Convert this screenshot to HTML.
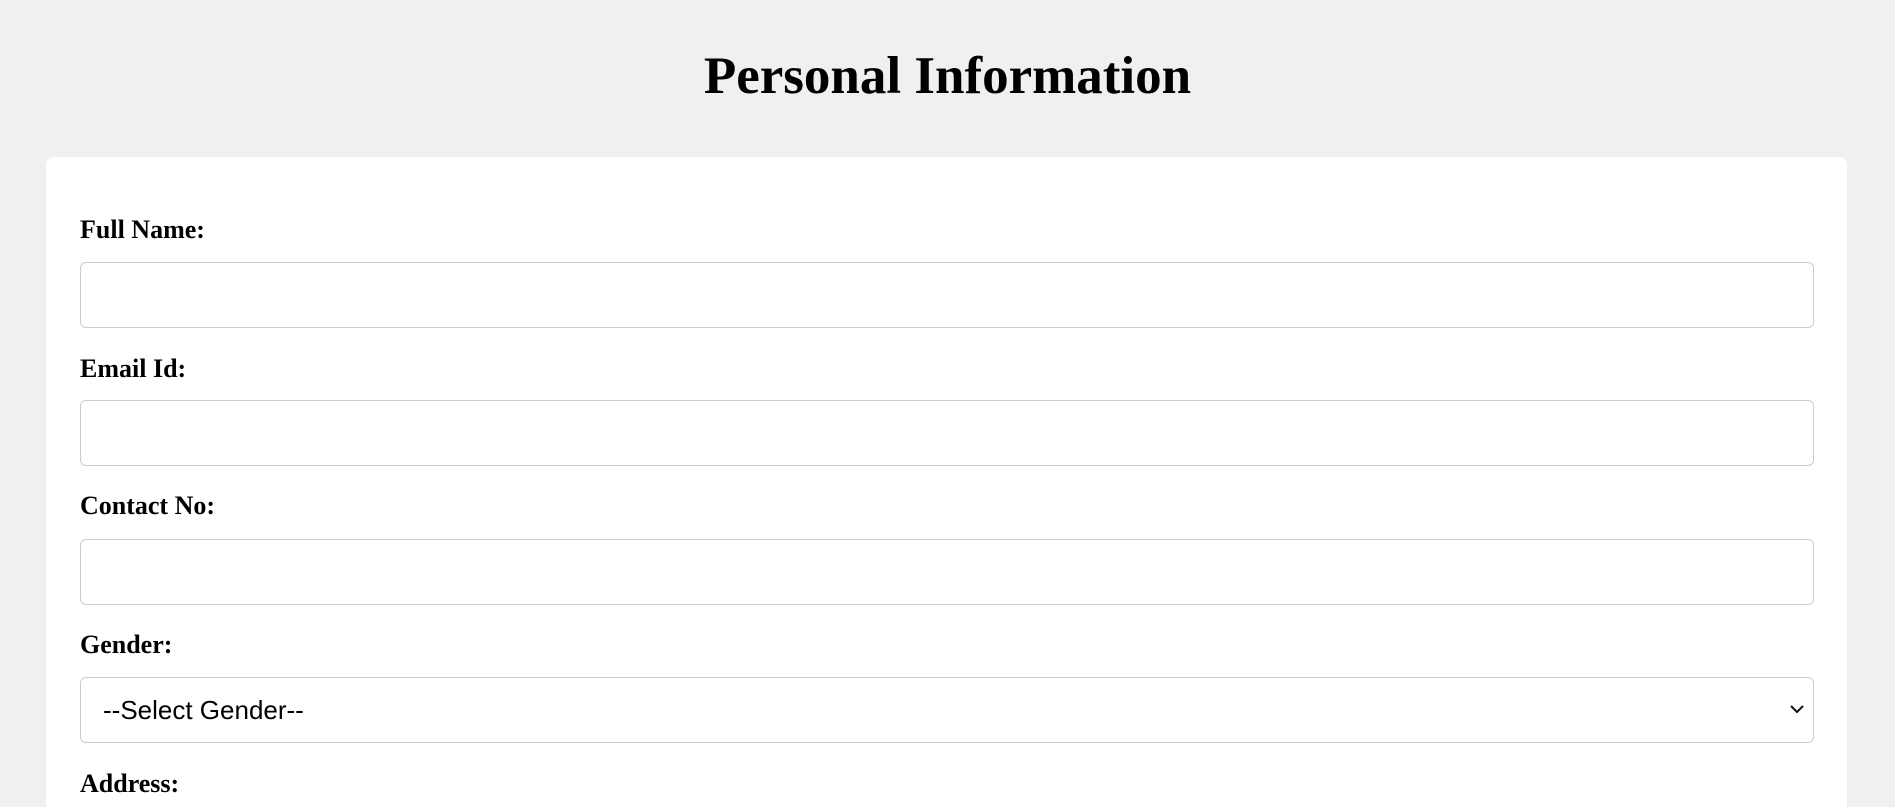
<!DOCTYPE html>
<html><head><style>
html,body{margin:0;padding:0;overflow:hidden;height:807px}
body{width:1895px;background:#f0f0f0;font-family:"Liberation Serif",serif;position:relative}
h1{margin:0;position:absolute;top:44px;left:0;width:1895px;text-align:center;font-size:53px;font-weight:bold;line-height:64px}
.card{position:absolute;left:46px;top:157px;width:1801px;height:650px;background:#fff;border-radius:8px 8px 0 0}
.lbl{position:absolute;left:80px;font-size:26px;font-weight:bold;line-height:28px}
.inp{position:absolute;left:80px;width:1732px;height:64px;border:1px solid #ccc;border-radius:6px;background:#fff}
.sel{font-family:"Liberation Sans",sans-serif;font-size:26px;line-height:64px;padding-left:22px;box-sizing:content-box;width:1710px}
</style></head><body>
<h1>Personal Information</h1>
<div class="card"></div>
<div class="lbl" style="top:216px">Full Name:</div>
<div class="inp" style="top:262px"></div>
<div class="lbl" style="top:355px">Email Id:</div>
<div class="inp" style="top:400px"></div>
<div class="lbl" style="top:492px">Contact No:</div>
<div class="inp" style="top:539px"></div>
<div class="lbl" style="top:631px">Gender:</div>
<div class="inp sel" style="top:677px">--Select Gender--
<svg style="position:absolute;right:8px;top:25px" width="16" height="12" viewBox="0 0 16 12"><path d="M2 3 L8 9 L14 3" fill="none" stroke="#111" stroke-width="2"/></svg></div>
<div class="lbl" style="top:770px">Address:</div>
</body></html>
